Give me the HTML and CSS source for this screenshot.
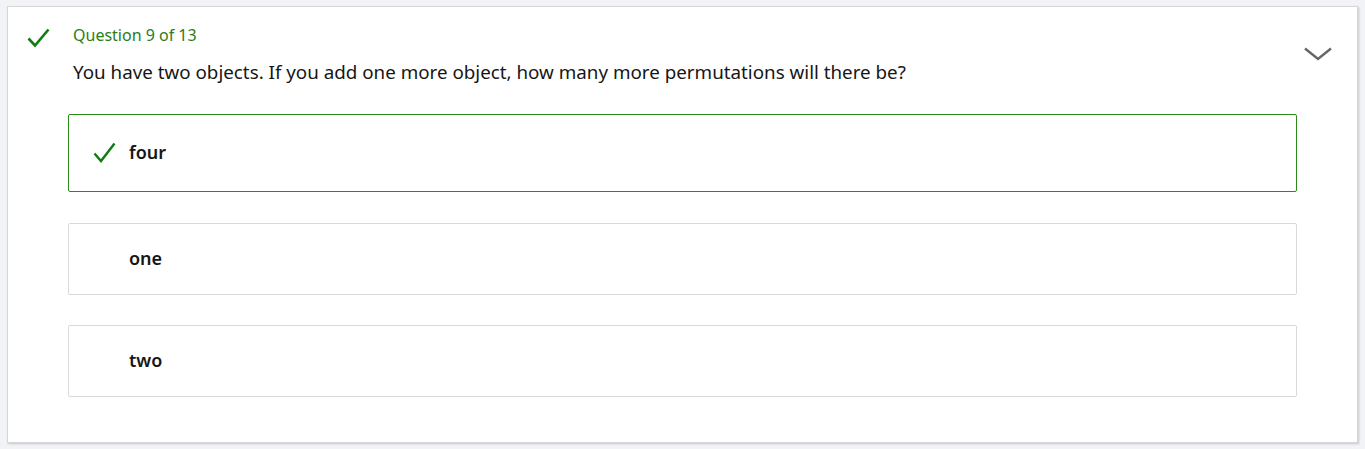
FILE: index.html
```html
<!DOCTYPE html>
<html lang="en">
<head>
<meta charset="utf-8">
<title>Question 9 of 13</title>
<link rel="stylesheet" href="styles.css">
</head>
<body>
<section class="card">
  <div class="status">
    <svg class="check-big" width="23" height="20" viewBox="0 0 23 20"><path d="M1.5 10.5 L8 17.5 L21.5 1.5" fill="none" stroke="#107c10" stroke-width="2.6"/></svg>
  </div>
  <div class="main">
    <div class="label">Question 9 of 13</div>
    <h2 class="question">You have two objects. If you add one more object, how many more permutations will there be?</h2>
    <ul class="options">
      <li class="option correct">
        <span class="opt-icon"><svg width="23" height="22" viewBox="0 0 23 22"><path d="M1.5 11.5 L8 19 L21.5 1.5" fill="none" stroke="#107c10" stroke-width="2.4"/></svg></span>
        <span class="opt-text">four</span>
      </li>
      <li class="option">
        <span class="opt-icon"></span>
        <span class="opt-text">one</span>
      </li>
      <li class="option">
        <span class="opt-icon"></span>
        <span class="opt-text">two</span>
      </li>
    </ul>
  </div>
  <div class="toggle">
    <svg width="28" height="14" viewBox="0 0 28 14"><path d="M1 1.5 L14 12 L27 1.5" fill="none" stroke="#666" stroke-width="2.4"/></svg>
  </div>
</section>
</body>
</html>
```
FILE: styles.css
```css
html, body {
  margin: 0;
  padding: 0;
}
body {
  background: #f1f3f6;
  font-family: "Noto Sans", "Open Sans", sans-serif;
  color: #161616;
  padding: 6px 7px 0 7px;
  height: 449px;
  box-sizing: border-box;
}
.card {
  background: #fff;
  border: 1px solid #d6d6d6;
  box-shadow: 1px 1px 2px rgba(0,0,0,0.18);
  height: 437px;
  box-sizing: border-box;
  display: flex;
  padding: 13px 0 0 19px;
}
.status {
  width: 41px;
  flex: none;
}
.check-big {
  display: block;
  margin-top: 8px;
}
.main {
  width: 1229px;
  flex: none;
}
.label {
  color: #2b7d18;
  font-size: 16px;
  line-height: 18px;
  margin: 6px 0 0 5px;
}
.question {
  font-size: 18.8px;
  font-weight: 400;
  line-height: 24px;
  margin: 16px 0 0 5px;
}
.options {
  list-style: none;
  margin: 30px 0 0 0;
  padding: 0;
  display: flex;
  flex-direction: column;
  gap: 30px;
}
.option {
  height: 72px;
  box-sizing: border-box;
  border: 1px solid #d9d9d9;
  border-radius: 2px;
  display: flex;
  align-items: center;
  padding-left: 24px;
  padding-bottom: 2px;
}
.option.correct {
  height: 78px;
  margin-bottom: 1px;
  border-color: #2b8a1a;
}
.opt-icon {
  width: 36px;
  flex: none;
  display: flex;
  align-items: center;
  padding-top: 2px;
}
.opt-icon svg {
  display: block;
}
.opt-text {
  font-size: 18px;
  font-weight: 600;
  color: #161616;
}
.toggle {
  flex: 1;
  padding-top: 27px;
  padding-left: 7px;
}
.toggle svg {
  display: block;
}
```
